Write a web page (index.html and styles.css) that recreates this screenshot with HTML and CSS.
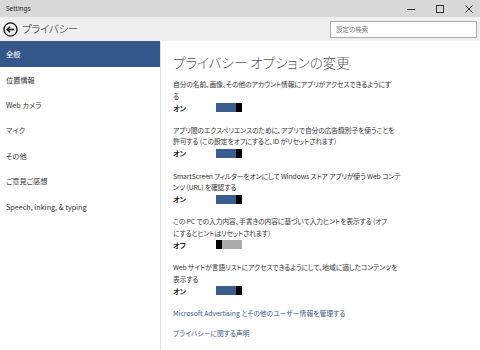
FILE: index.html
```html
<!DOCTYPE html>
<html lang="ja">
<head>
<meta charset="utf-8">
<title>Settings</title>
<link rel="stylesheet" href="styles.css">
</head>
<body>
<div class="window">
  <div class="titlebar">
    <span class="app-name">Settings</span>
    <div class="controls">
      <svg class="ctl" width="12" height="12" viewBox="0 0 12 12"><line x1="2" y1="6.5" x2="10" y2="6.5" stroke="#333" stroke-width="1"/></svg>
      <svg class="ctl" width="12" height="12" viewBox="0 0 12 12"><rect x="2.5" y="2.5" width="7" height="7" fill="none" stroke="#333" stroke-width="1"/></svg>
      <svg class="ctl" width="12" height="12" viewBox="0 0 12 12"><path d="M2.5 2.5 L9.5 9.5 M9.5 2.5 L2.5 9.5" stroke="#333" stroke-width="1"/></svg>
    </div>
  </div>
  <div class="header">
    <svg class="back" width="15" height="15" viewBox="0 0 16 16"><circle cx="8" cy="8" r="7" fill="none" stroke="#111" stroke-width="1.4"/><path d="M12 8 H4.5 M7.5 5 L4.5 8 L7.5 11" fill="none" stroke="#111" stroke-width="1.5"/></svg>
    <span class="page-title">プライバシー</span>
    <div class="search">設定の検索</div>
  </div>
  <div class="main">
    <nav class="nav">
      <div class="nav-item active">全般</div>
      <div class="nav-item">位置情報</div>
      <div class="nav-item">Web カメラ</div>
      <div class="nav-item">マイク</div>
      <div class="nav-item">その他</div>
      <div class="nav-item">ご意見ご感想</div>
      <div class="nav-item">Speech, inking, &amp; typing</div>
    </nav>
    <section class="content">
      <h1 class="heading">プライバシー オプションの変更</h1>
      <div class="group">
        <p class="desc">自分の名前、画像、その他のアカウント情報にアプリがアクセスできるようにす<br>る</p>
        <div class="toggle-row"><span class="state">オン</span><span class="toggle on"></span></div>
      </div>
      <div class="group">
        <p class="desc">アプリ間のエクスペリエンスのために、アプリで自分の広告識別子を使うことを<br>許可する (この設定をオフにすると、ID がリセットされます)</p>
        <div class="toggle-row"><span class="state">オン</span><span class="toggle on"></span></div>
      </div>
      <div class="group">
        <p class="desc">SmartScreen フィルターをオンにして Windows ストア アプリが使う Web コンテ<br>ンツ (URL) を確認する</p>
        <div class="toggle-row"><span class="state">オン</span><span class="toggle on"></span></div>
      </div>
      <div class="group">
        <p class="desc">この PC での入力内容、手書きの内容に基づいて入力ヒントを表示する (オフ<br>にするとヒントはリセットされます)</p>
        <div class="toggle-row"><span class="state">オフ</span><span class="toggle off"></span></div>
      </div>
      <div class="group">
        <p class="desc">Web サイトが言語リストにアクセスできるようにして、地域に適したコンテンツを<br>表示する</p>
        <div class="toggle-row"><span class="state">オン</span><span class="toggle on"></span></div>
      </div>
      <a class="link first">Microsoft Advertising とその他のユーザー情報を管理する</a>
      <a class="link">プライバシーに関する声明</a>
    </section>
  </div>
</div>
</body>
</html>
```

FILE: styles.css
```css
* { box-sizing: border-box; }
html, body { margin: 0; padding: 0; }
body {
  width: 480px;
  height: 350px;
  overflow: hidden;
  background: #fff;
  font-family: "Noto Sans CJK JP", "Noto Sans", sans-serif;
  font-feature-settings: "palt";
  color: #222;
}
.window { width: 480px; height: 350px; display: flex; flex-direction: column; }
.titlebar {
  height: 17px;
  background: #d8d8d8;
  display: flex;
  align-items: center;
  justify-content: space-between;
  padding-left: 6px;
}
.app-name { font-family: "Noto Sans", sans-serif; font-size: 6.5px; color: #222; }
.controls { display: flex; gap: 17px; padding-right: 5px; }
.ctl { display: block; }
.header {
  height: 24px;
  background: #efefef;
  display: flex;
  align-items: center;
  padding-left: 3px;
  padding-right: 3px;
}
.back { display: block; }
.page-title { font-size: 10.5px; letter-spacing: -0.3px; font-weight: 300; margin-left: 4px; color: #222; line-height: 1; }
.search {
  margin-left: auto;
  width: 147px;
  height: 17px;
  border: 1px solid #a9a9a9;
  background: #fff;
  font-size: 6.5px;
  color: #777;
  padding-left: 5px;
  display: flex;
  align-items: center;
}
.main { flex: 1; display: flex; }
.nav {
  width: 161px;
  border-right: 1px solid #e2e2e2;
  display: flex;
  flex-direction: column;
}
.nav-item {
  height: 25.4px;
  display: flex;
  align-items: center;
  padding-left: 6px;
  font-size: 7.2px;
  color: #333;
}
.nav-item.active { height: 26px; background: #35568a; color: #fff; }
.content { flex: 1; padding: 12px 0 0 12px; }
.heading {
  margin: 0 0 8px 0;
  font-size: 13.5px;
  font-weight: 300;
  line-height: 18px;
  color: #555;
}
.group { margin-bottom: 11.8px; }
.desc { margin: 0; font-size: 6.8px; letter-spacing: -0.12px; line-height: 11.5px; color: #333; }
.toggle-row { display: flex; align-items: center; height: 11px; }
.state { width: 43px; font-size: 7px; font-weight: bold; color: #222; }
.toggle { width: 26px; height: 9px; display: block; }
.toggle.on { background: #3b5c8e; border-right: 6px solid #000; }
.toggle.off { background: #ababab; border-left: 6px solid #000; }
.link { display: block; font-size: 6.8px; color: #3b5c8e; line-height: 11px; }
.link.first { margin-top: 5px; margin-bottom: 9px; }
```
